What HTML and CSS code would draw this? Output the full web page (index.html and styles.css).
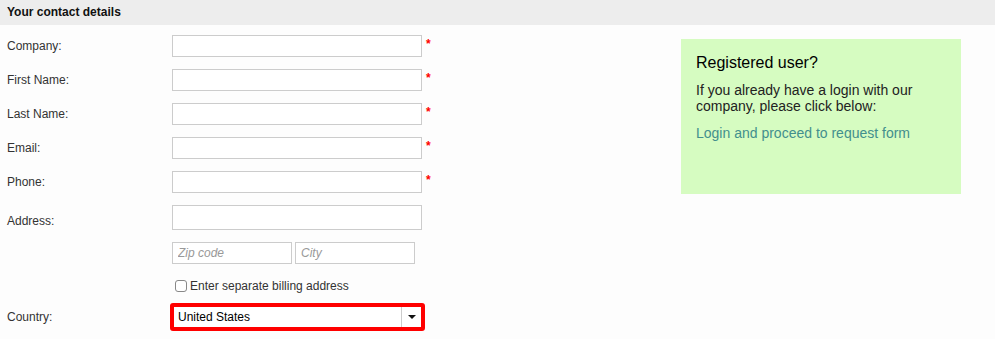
FILE: index.html
```html
<!DOCTYPE html>
<html>
<head>
<title>Request form</title>
<meta charset="utf-8" />
<link rel="stylesheet" href="styles.css">
</head>
<body>
	<div class="section_title">Your contact details</div>
	<div id="content">
		<form id="contact_form">
			<div class="row">
				<label>Company:</label>
				<input type="text" class="txt" />
				<span class="req">*</span>
			</div>
			<div class="row">
				<label>First Name:</label>
				<input type="text" class="txt" />
				<span class="req">*</span>
			</div>
			<div class="row">
				<label>Last Name:</label>
				<input type="text" class="txt" />
				<span class="req">*</span>
			</div>
			<div class="row">
				<label>Email:</label>
				<input type="text" class="txt" />
				<span class="req">*</span>
			</div>
			<div class="row">
				<label>Phone:</label>
				<input type="text" class="txt" />
				<span class="req">*</span>
			</div>
			<div class="row row_top">
				<label class="lbl_address">Address:</label>
				<div class="address">
					<textarea class="txt_area"></textarea>
					<div class="zip_city">
						<input type="text" class="txt_small" placeholder="Zip code" />
						<input type="text" class="txt_small" placeholder="City" />
					</div>
				</div>
			</div>
			<div class="row row_check">
				<label></label>
				<span class="check_box"></span>
				<span>Enter separate billing address</span>
			</div>
			<div class="row">
				<label>Country:</label>
				<div class="country_select">
					<span class="sel_value">United States</span>
					<span class="sel_arrow"><span class="arrow"></span></span>
				</div>
			</div>
		</form>
		<div id="registered">
			<h2>Registered user?</h2>
			<p>If you already have a login with our company, please click below:</p>
			<a href="#">Login and proceed to request form</a>
		</div>
	</div>
</body>
</html>
```
FILE: styles.css
```css
body {
	margin: 0;
	background: #fdfdfd;
	font: 12px/16px "Liberation Sans", Arial, Helvetica, sans-serif;
	color: #333;
}
.section_title {
	background: #ededed;
	height: 25px;
	line-height: 25px;
	padding-left: 7px;
	font-weight: bold;
	color: #111;
}
#content {
	display: flex;
	padding-top: 10px;
}
#contact_form {
	width: 674px;
	padding-left: 7px;
}
.row {
	display: flex;
	align-items: center;
	margin-bottom: 12px;
}
.row label {
	width: 165px;
	flex: none;
}
.row_top {
	align-items: flex-start;
}
.lbl_address {
	padding-top: 8px;
}
.txt {
	width: 250px;
	height: 22px;
	box-sizing: border-box;
	border: 1px solid #ccc;
	background: #fff;
	margin: 0;
}
.req {
	color: #f00;
	font-weight: bold;
	font-size: 12px;
	margin-left: 4px;
	align-self: flex-start;
	line-height: 12px;
	padding-top: 3px;
}
.address {
	display: flex;
	flex-direction: column;
}
.txt_area {
	width: 250px;
	height: 25px;
	box-sizing: border-box;
	border: 1px solid #ccc;
	background: #fff;
	margin: 0;
	resize: none;
}
.zip_city {
	display: flex;
	gap: 3px;
	margin-top: 12px;
}
.txt_small {
	width: 120px;
	height: 22px;
	box-sizing: border-box;
	border: 1px solid #ccc;
	background: #fff;
	margin: 0;
	padding: 0 5px;
	font: italic 12px "Liberation Sans", Arial, sans-serif;
}
.txt_small::placeholder {
	color: #999;
}
.row_check {
	margin-top: 14px;
	margin-bottom: 9px;
}
.check_box {
	width: 10px;
	height: 10px;
	border: 1px solid #888;
	border-radius: 3px;
	background: #fff;
	margin: 0 3px 0 3px;
}
.country_select {
	display: flex;
	width: 255px;
	height: 28px;
	box-sizing: border-box;
	border: 4px solid #f00;
	border-radius: 3px;
	background: #fff;
	margin-left: -2px;
	color: #000;
}
.sel_value {
	flex: 1;
	line-height: 20px;
	padding-left: 4px;
}
.sel_arrow {
	width: 19px;
	border-left: 1px solid #ccc;
	display: flex;
	align-items: center;
	justify-content: center;
}
.arrow {
	width: 0;
	height: 0;
	border-left: 4px solid transparent;
	border-right: 4px solid transparent;
	border-top: 4px solid #111;
}
#registered {
	width: 280px;
	height: 155px;
	box-sizing: border-box;
	margin-top: 4px;
	padding: 14px 15px;
	background: #d6fcc1;
	font-size: 14px;
	line-height: 16px;
	color: #222;
}
#registered h2 {
	margin: 0 0 10px;
	font-size: 16px;
	line-height: 19px;
	font-weight: normal;
	color: #000;
}
#registered p {
	margin: 0 0 11px;
}
#registered a {
	color: #428f8d;
	text-decoration: none;
}
```
